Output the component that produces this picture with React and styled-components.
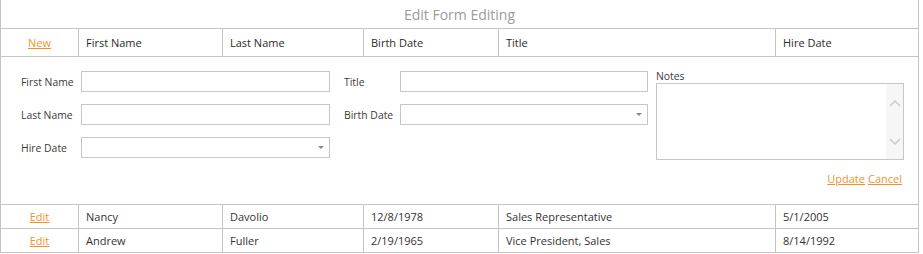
import styled, { createGlobalStyle } from "styled-components";

const GlobalStyle = createGlobalStyle`
    body {
        margin: 0;
        background: #ffffff;
        font-family: "Open Sans", "Liberation Sans", sans-serif;
        color: #333333;
    }
`;

const ORANGE = "#f39128";
const LINE = "#c4c4c4";

const Grid = styled.div`
    width: 917px;
    border-left: 1px solid ${LINE};
    border-right: 1px solid ${LINE};
`;

const Caption = styled.div`
    height: 28px;
    border-bottom: 1px solid ${LINE};
    display: flex;
    align-items: center;
    justify-content: center;
    font-size: 14px;
    color: #9b9b9b;
`;

const Row = styled.div`
    display: grid;
    grid-template-columns: 77px 144px 141px 135px 277px 143px;
    height: ${(p) => p.$height}px;
    border-bottom: 1px solid ${LINE};
`;

const Cell = styled.div`
    display: flex;
    align-items: center;
    padding-left: 7px;
    font-size: 11px;
    color: ${(p) => (p.$header ? "#2b2b2b" : "#333333")};
    white-space: nowrap;
    & + & {
        border-left: 1px solid ${LINE};
    }
`;

const CommandCell = styled(Cell)`
    justify-content: center;
    padding-left: 0;
`;

const Link = styled.a`
    color: ${ORANGE};
    text-decoration: underline;
    cursor: pointer;
    font-size: 11px;
`;

const EditForm = styled.div`
    height: 148px;
    border-bottom: 1px solid ${LINE};
    box-sizing: border-box;
    padding: 14px 14px 0 20px;
    display: flex;
    flex-direction: column;
`;

const Columns = styled.div`
    display: flex;
    align-items: flex-start;
`;

const FieldGroup = styled.div`
    display: grid;
    grid-template-columns: ${(p) => p.$labelWidth}px ${(p) => p.$inputWidth}px;
    row-gap: 12px;
    align-items: center;
    margin-left: ${(p) => p.$offset || 0}px;
`;

const Label = styled.label`
    font-size: 10.4px;
    color: #3a3a3a;
    white-space: nowrap;
`;

const Input = styled.div`
    position: relative;
    height: 21px;
    box-sizing: border-box;
    border: 1px solid #c6c6c6;
    background: #fff;
`;

const DropArrow = styled.span`
    position: absolute;
    right: 5px;
    top: 8px;
    width: 0;
    height: 0;
    border-left: 3px solid transparent;
    border-right: 3px solid transparent;
    border-top: 3px solid #8a8a8a;
`;

const NotesColumn = styled.div`
    margin-left: 8px;
    margin-top: -1px;
    width: 250px;
    display: flex;
    flex-direction: column;
`;

const NotesLabel = styled(Label)`
    line-height: 12px;
    margin-bottom: 1px;
`;

const Memo = styled.div`
    height: 77px;
    box-sizing: border-box;
    border: 1px solid #c6c6c6;
    display: flex;
    justify-content: flex-end;
`;

const ScrollBar = styled.div`
    width: 17px;
    background: #f6f6f6;
    display: flex;
    flex-direction: column;
    justify-content: space-between;
    align-items: center;
    padding: 16px 0 14px;
`;

const Actions = styled.div`
    display: flex;
    justify-content: flex-end;
    gap: 3px;
    margin-top: 11px;
    padding-right: 2px;
`;

function Chevron({ up }) {
    return (
        <svg width="12" height="7" viewBox="0 0 12 7">
            <path
                d={up ? "M1 6 L6 1 L11 6" : "M1 1 L6 6 L11 1"}
                fill="none"
                stroke="#cccccc"
                strokeWidth="1.6"
            />
        </svg>
    );
}

const employees = [
    ["Nancy", "Davolio", "12/8/1978", "Sales Representative", "5/1/2005"],
    ["Andrew", "Fuller", "2/19/1965", "Vice President, Sales", "8/14/1992"],
];

export default function App() {
    return (
        <>
            <GlobalStyle />
            <Grid>
                <Caption>Edit Form Editing</Caption>
                <Row $height={27}>
                    <CommandCell>
                        <Link>New</Link>
                    </CommandCell>
                    <Cell $header>First Name</Cell>
                    <Cell $header>Last Name</Cell>
                    <Cell $header>Birth Date</Cell>
                    <Cell $header>Title</Cell>
                    <Cell $header>Hire Date</Cell>
                </Row>
                <EditForm>
                    <Columns>
                        <FieldGroup $labelWidth={60} $inputWidth={249}>
                            <Label>First Name</Label>
                            <Input />
                            <Label>Last Name</Label>
                            <Input />
                            <Label>Hire Date</Label>
                            <Input>
                                <DropArrow />
                            </Input>
                        </FieldGroup>
                        <FieldGroup $labelWidth={56} $inputWidth={248} $offset={14}>
                            <Label>Title</Label>
                            <Input />
                            <Label>Birth Date</Label>
                            <Input>
                                <DropArrow />
                            </Input>
                        </FieldGroup>
                        <NotesColumn>
                            <NotesLabel>Notes</NotesLabel>
                            <Memo>
                                <ScrollBar>
                                    <Chevron up />
                                    <Chevron />
                                </ScrollBar>
                            </Memo>
                        </NotesColumn>
                    </Columns>
                    <Actions>
                        <Link>Update</Link>
                        <Link>Cancel</Link>
                    </Actions>
                </EditForm>
                {employees.map((e) => (
                    <Row $height={23} key={e[0]}>
                        <CommandCell>
                            <Link>Edit</Link>
                        </CommandCell>
                        {e.map((v, i) => (
                            <Cell key={i}>{v}</Cell>
                        ))}
                    </Row>
                ))}
            </Grid>
        </>
    );
}
